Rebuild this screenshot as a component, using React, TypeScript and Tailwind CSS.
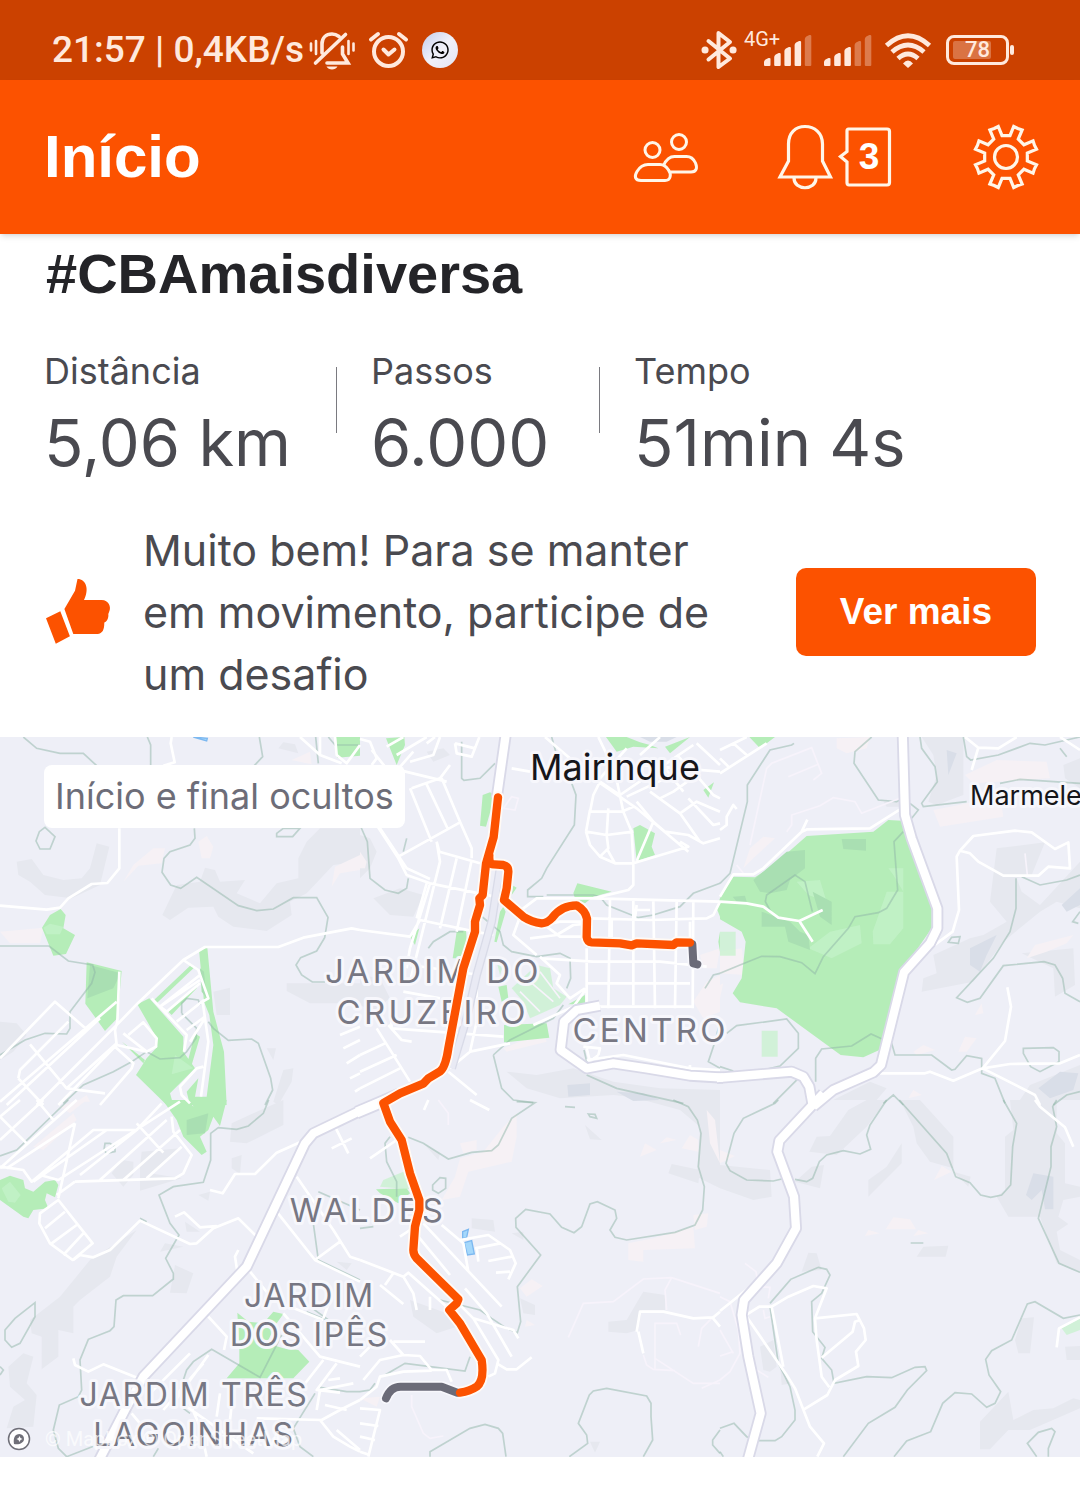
import { FaWhatsapp } from "react-icons/fa";

type Tile = {
  x: number;
  y: number;
  shade?: string;
  slate?: string;
  sand?: string;
  green?: string;
  mint?: string;
  dark?: string;
  water?: string;
  contour?: string;
  faint?: string;
  road?: string;
  highway?: string;
  rail?: string;
};

// Map geometry, one block per map tile, in thirds of a point.
const tiles: Tile[] = [
  {
    x: 0,
    y: -6,
    shade:
      "M50 380L95 372 130 420 190 435 245 430 270 400 290 325 328 335 300 450 215 490 135 480 90 440 55 420ZM487 540L530 450 600 440 615 398 645 405 660 440 735 435 710 475 780 505 830 445 895 430 895 370 920 320 960 280 1080 280 1080 380 1000 390 920 475 870 500 875 540 800 588 700 575 655 545 640 515 565 518 510 555ZM835 40L850 22 885 28 895 55ZM860 745H1080V805H930L860 768ZM640 770L690 758V840H650ZM0 860L50 865 80 900 40 950 0 975ZM820 1100L850 1005 880 1000 875 1040 835 1110ZM800 940H828L820 975Z",
    sand: "M0 590L130 578 120 625H30ZM370 440L400 390 460 340 495 340 485 385 415 392ZM595 320L620 303 640 335 630 370 605 370ZM995 455L1005 395 1080 360V405L1020 415ZM875 75L930 50 935 88ZM230 1100L260 1080 270 1100Z",
    green:
      "M126 578L150 540 182 522 197 540 190 580 225 600 198 657 160 662ZM260 682L365 708 352 850 315 888 256 806ZM412 808L448 790 550 905 550 950 585 1000 510 1075 520 1110H500L408 1020 440 970 472 935 465 900ZM597 645L622 638 640 830 672 950 680 1110H570L560 1070 595 1030 585 1085 620 1085 640 930 628 840 612 800ZM462 795L575 688 582 698 470 805ZM505 830L595 745 590 760 515 840ZM585 895L600 905 575 990 562 985ZM366 920L435 975 430 985ZM1008 6H1080V62L1012 68Z",
    dark: "M270 690L362 715 340 760 262 790ZM600 700L612 710 620 790 605 770Z",
    mint: "M130 578L150 566 190 575 180 598 140 598ZM525 960L580 1000 515 1018Z",
    water: "M580 6L622 10 620 18Z",
    contour:
      "M70 6L110 40 180 55H250L290 92M442 6L452 30V92M778 6L788 65 760 95M135 277L165 305 150 342H120L108 318 118 290ZM583 280L585 310 570 330 510 350 492 370 486 412 512 450 542 460 590 427 715 512 770 527 820 522 880 488H950L984 547 974 608 950 648 902 668 888 690 905 720 937 741H975M0 633H147L205 678 278 690 285 712 275 745 210 830V880L200 897 135 895 75 915 0 960M830 295L850 280H900L878 305H830ZM545 835V805L560 790 595 795 600 810M545 835L590 880 588 910 560 950 540 968 480 972 440 950 395 980 340 1010 250 1050 190 1105M625 860L640 880 685 916 755 912 775 925 812 1030 818 1065 795 1110M947 6L955 85M985 6L1005 30H1080",
    road:
      "M0 512L140 524 180 518 205 490 275 447 322 444 358 400V280M515 6L512 25 524 82 490 92M0 970L165 800 262 885M412 806L500 722 550 675 615 636H835L910 608 1055 580 1080 585M550 675L595 705 625 790 608 800 625 920 603 1085M600 720L480 815 600 735M455 790L560 900 552 950M480 815L500 830 600 745M530 860L612 795M560 885L615 845M570 920L615 850M370 895L440 950M385 900L430 862 470 910 468 935 440 950 350 930 345 885 352 860 358 710M0 1100L350 800M20 1110L300 850M110 1110L360 860 412 806M175 1110L345 935 400 985 395 1000 300 1110M90 928L200 1060 315 1075M55 1030L60 1005 205 860M55 1030L130 1110M200 1060L350 925M610 995L590 1000 540 1055 545 1080 570 1105M900 6L960 60 1025 85M960 6V60M1005 6L1010 60 1040 85 1080 30M1020 900L1080 875M1030 940L1080 915M1040 985L1080 960M1050 1030L1080 1015M1065 1070L1080 1060",
  },
  {
    x: 1080,
    y: -6,
    shade:
      "M0 300L30 310 50 350 30 400 0 430ZM40 490L120 460 190 480 160 545 90 540ZM440 1010L530 1020 640 1000 760 1040 900 1060 1080 1065V1095H900L760 1080 600 1090 500 1060ZM0 720L60 730 90 790 40 830 0 810ZM200 50L250 40 270 60 220 80Z",
    slate: "M840 6H950L920 20H870ZM622 1050L690 1045 690 1080 625 1085ZM770 1070L850 1075 900 1095 820 1098Z",
    sand: "M1040 740L1080 720V830L1030 850 1000 800ZM430 940L550 890 560 920 440 950ZM0 350L20 380 15 400 0 400ZM1020 660L1080 640 1070 700H1030Z",
    green:
      "M78 10L133 6 135 30 110 90ZM368 180L390 172 405 180 378 275 360 272ZM738 6H800L840 22 870 30 895 40 820 35 770 50ZM915 35L990 6 930 55ZM820 280L840 270 885 295 875 335 885 360 830 378ZM1030 165L1062 142 1045 188ZM640 475L652 445 755 470 700 485 675 505 645 490ZM150 605L178 580 165 630ZM290 590L318 585 320 615 302 670H278ZM403 620L420 530 430 515 437 530 410 622ZM460 452L470 458 455 480ZM415 755L440 750 445 790 425 800ZM432 870L560 865 568 908 432 922ZM625 808L675 780V808ZM1080 490L1070 520 1080 545ZM1080 590L1075 620 1080 650Z",
    mint: "M455 760L530 690 570 700 580 760 620 785 600 810 510 850 490 800ZM410 680L430 690 420 720Z",
    contour:
      "M305 20V130L312 136 360 130 405 85M575 6L590 60M635 145L648 180 643 270 560 400 545 430 503 465V485H550M560 480H700L720 485 740 510 835 548 880 540 960 515 1000 475 1080 445M0 270L22 320 30 430 75 465 115 475 140 460 145 430M140 310L130 350M205 640L220 620 270 590H310M360 540L420 590 430 630 455 650 530 665 600 655 630 670 632 730 620 760M400 960L450 915 580 850 610 810M400 960L410 1000 425 1060 460 1095 520 1103M1080 715L1060 720 1035 760M1080 860L1065 920 1045 980 1080 1000M680 1020L770 1060 970 1105M672 945L685 1000",
    road:
      "M0 12L30 20 50 70 35 90M80 35L130 6M110 60L200 6M150 80L220 60 240 6M160 50L90 130M200 25L225 6M285 25L345 40 358 6M285 25L290 55 335 65 345 40M35 45L75 95 260 140M155 160L240 130 270 90M245 130L300 260 335 340V370M150 160L215 320M200 148L265 285M115 365L300 262M0 230L50 270 115 370 140 420 210 445 430 490M60 280L140 400 210 432M230 320L238 350 360 385M230 320L240 380 150 740M290 370L240 580M335 375L290 590M210 445L150 640 140 700M0 585L150 605 180 555 345 590 400 600M200 445L170 550M455 100L510 110M555 6L700 130 830 220 985 350M715 6L765 110 790 230 815 290 820 380M690 230H785L820 215M690 230L700 180 720 140M678 290L690 225M678 290L740 300 820 290M678 290L690 330 720 365 765 385H820L985 335 960 320M740 300L745 340 720 365M740 300L745 220M765 385L740 340M720 140L780 180 1000 30M840 90L1080 110M830 200L880 260 830 378M880 260L915 290 985 300 1030 325 1080 310M800 185L960 110M900 190L940 170 1010 120M870 170L960 235 1010 200 1080 230M960 235L1020 320M985 190L1060 270 1080 265M1000 110L1060 180 1080 190M900 80L970 170M950 60L1020 130M1010 25L1080 90M840 60L900 6M800 40L720 130M820 380V450L805 465 700 490 530 490 490 520 480 545 460 600 530 660M510 610L590 600 640 570 690 565M560 575L600 605H680M550 570L600 560H680M690 550L870 555 1040 550 1060 540 1080 500M820 490V810M750 490L745 820M880 495L885 820M950 495L945 820M1000 495L998 820M700 490L1080 500M820 525H870M830 510L825 550M680 680H900L1040 695M545 670L700 680M680 745H990M640 815H1000M680 640V820M755 550V640M990 560V620M540 665L600 720 590 745 630 790 675 760M150 690L360 720M130 770L240 790M90 800L95 880 430 905M85 870L125 915 155 920M50 880L150 1040M0 960L75 925M0 1010L110 960M0 1060L120 1000M265 1010L350 1080M270 1000L330 950 450 925M330 950L350 860 350 720M520 870L640 815 680 760M680 940L690 980 715 960M670 935L720 940 715 960M680 975L790 960 990 1000 1080 1005M990 990V1010",
    faint: "M430 220L455 185 475 190 465 225ZM510 740L580 800M480 770L540 830M540 710L600 790",
    rail: "M420 400L395 560 350 720 320 850 275 1000",
    highway:
      "M437 0L410 190M720 812L650 825 612 860 602 945 680 1000 760 985 860 1000 990 1022 1090 1028M120 1075L-10 1130",
  },
  {
    x: 2160,
    y: -6,
    shade:
      "M605 6H730V180L650 210 625 200 650 120 640 60ZM830 340L975 322 935 420 890 430 905 470 960 510 1080 380V520L1010 500 960 530 850 620 760 740 605 770 610 730 650 715 640 660 750 610 790 600 860 560 810 500ZM880 100L960 95 980 130 890 135ZM1030 90L1080 70V160L1035 130ZM780 110L820 120 800 150ZM905 655L1060 640 1065 750 1005 785 1000 700ZM490 200H545V215H500ZM350 1090L450 1040 500 1060 470 1095H340ZM900 1095L930 1050 1080 990V1095Z",
    slate: "M680 45L710 55 685 120ZM750 640L830 600 800 660 780 710 750 690ZM1025 510L1080 460V510L1040 530ZM955 1060L1020 1010 1075 1015 1060 1065 990 1090Z",
    sand: "M350 10L450 6 440 40 380 55 350 40ZM640 225L840 185 850 245 660 275ZM735 120L830 75 980 80 990 130 760 145ZM70 400L90 340 130 305 165 310 100 370ZM920 670L945 630 1060 600 1040 625 980 650ZM0 650L65 640 75 720 0 715ZM715 950L735 905 770 910 740 950ZM580 950L610 930 645 945 590 960ZM765 840L785 805 790 835ZM0 750L10 745 0 790ZM565 1090L580 1065 605 1080Z",
    green:
      "M0 490L38 425 105 427 155 395 260 303 460 290 505 255 545 257 635 520V580L552 700 478 945 430 967 362 960 170 820 60 802 38 775 65 730 77 620 65 590 0 553ZM88 6H165L120 40Z",
    mint: "M125 887H173V965H125ZM0 590H47V662H0ZM265 640L330 590 420 570 425 625 335 670ZM458 590L500 470 550 470V580L510 628H460ZM505 400H550V470L520 420ZM230 440L300 435 320 500 265 480Z",
    dark: "M100 435L200 350 255 345V400L210 435 200 465 150 475 120 470ZM365 312H438V347L370 342ZM278 470L335 500V570L300 545ZM125 530L210 560 240 590 265 600 270 645 205 620 195 575H125ZM38 485L75 482 80 500H50Z",
    contour:
      "M222 25L215 30 150 45 82 150V200L30 415 0 445M455 6L405 50 402 85 475 195 530 200 550 190M600 6L605 40 645 95 652 140 605 205 610 215 740 200M730 6L740 65 752 75 835 60 930 25 975 30 1080 6M840 145L900 133 1080 145M1020 40L1040 65M550 290L522 320 533 465 500 520 475 533 405 545 385 580 310 665 285 716 245 683 180 665 125 664 60 690 0 715M277 530L255 440 225 420 140 480 136 500 155 535M287 1040V970L305 942 395 933 453 897 515 925 525 960H635L695 1005 705 1003 740 962 785 970V1015L825 1030 855 1105M888 430V520L870 590 820 670 710 788 742 802 780 790 850 692 972 680 1005 690 1028 730 1035 775 1080 800M905 425L960 450 1040 435 1080 420M685 622L695 607 720 605 715 625ZM570 205L595 225 575 250M910 940L1000 938 1017 950V980L960 1010 932 995 910 955ZM20 895L50 872 200 852 235 895V940L180 993 110 1010M0 995L40 1008M160 1105L235 1030M1080 530L1058 560 1075 565M490 1105L520 1080 550 1110M1000 1110L1040 1080 1080 1070",
    road:
      "M0 500L80 505 130 515 175 548 238 558 308 525M238 558L278 620M0 485L40 418H100L130 400 245 290 262 254M245 290L262 283 450 280 545 220M0 115L140 25M0 70L25 95M0 45L80 6M40 25L80 60M735 6L775 38 835 40 890 6M775 38L755 105M1020 6L1080 45M720 347L710 365 717 525 698 590 630 640M720 347L760 303 885 287 935 292 1005 342 1045 322 1050 400 985 395 955 422H850L775 380 750 355ZM480 1015H615L630 1010 700 1037 788 1000 855 918 873 815 862 757M788 1000L870 987 1020 985 1080 960M788 1000L945 1080 960 1110M0 285L20 270V245L40 210 50 222",
    faint:
      "M90 330L140 100 155 85 275 38 305 115 280 135M205 125L295 88M200 290L215 270V240L300 212 340 188 405 200 425 235 540 190M915 355L922 420M50 390L70 415",
    highway:
      "M548 -10L555 240 575 310 652 520V580L630 625 552 712 483 990 460 1012 340 1065 280 1115M-10 1029L215 1010 250 1025 268 1055 278 1110",
  },
  {
    x: 0,
    y: 1089,
    shade:
      "M90 660L180 590 270 480 410 390 350 470 330 530 240 600 220 620V700L175 690V770L125 808V710L95 700ZM25 800L70 760 100 770 80 850 110 885 100 980 20 985 40 920 75 900 30 860ZM760 40L850 0V75L740 130 690 125 695 70ZM335 220L365 180 400 185V225L370 260ZM420 200L425 155 540 145 450 220 545 235 420 272ZM695 175L725 165 720 222 695 205ZM595 285L630 275 625 302ZM480 455L495 430 550 440ZM525 495L580 520 560 580 510 578ZM555 365L600 395 560 395ZM1010 485L1055 490 1040 510Z",
    sand: "M100 140L220 40 230 60 130 150ZM180 20L230 0H260L210 40Z",
    green:
      "M488 0H565L580 20 575 0H680L660 78 640 50 625 90 600 110 620 155 605 165 550 110 530 60ZM0 240L30 227 70 240 75 265 100 275 135 245 165 240 175 255 165 292 140 280 135 300 145 325 100 330 85 355 70 350 0 300ZM712 638L745 665 790 670 820 635 850 642 830 670 800 730 850 745 895 750 928 785 880 835H680L718 790V750ZM655 870L690 890Z",
    mint: "M5 265L30 245 62 285 45 308 25 305Z",
    dark: "M560 60L625 40 615 100 560 105Z",
    contour:
      "M0 168L50 150 205 0M330 130L345 140V155L320 160 312 150 315 130ZM806 0L790 40 745 78 710 88 655 83 632 100V180L610 247 520 260 477 285 510 370 537 405 497 475 520 520V537L458 587H370L348 600 342 680 330 692 265 718 240 780 245 870 235 890 178 915 160 990 175 1045 200 1070 290 1035M105 608V650L60 730 35 742 15 720V690L45 655ZM0 800L10 810 0 825M420 355L440 365M550 840L560 810 580 785 635 748 780 832 845 705M550 925L570 940M940 370L955 480 1080 540M955 275L1080 330M960 862L1040 875H1080M945 880L880 985 900 1040 940 1070M920 635L980 660M460 1070L475 1045M930 620L1000 670",
    road:
      "M0 50L60 0M0 120L130 0M0 205L230 0M20 205L225 70M0 200L70 210 95 245 280 90H410L485 10M120 225L175 240 540 5M225 70L175 295M225 245L525 235 550 220 575 165 520 95 515 50M240 225L410 90M300 240L500 60M370 240L540 90M440 235L545 140M410 70L490 158M100 245L320 90M80 130L0 50M160 60L110 0M175 300L120 340 118 370 150 430 218 480 278 430ZM135 385L195 335M155 430L230 375M190 465L250 400M170 285L225 245M220 480L240 465 280 472 330 450 420 362 570 432 590 430 640 385 715 355 770 410M525 350L552 337 600 382 650 378M630 270L668 280 705 222H765L830 158 915 120M1005 80L1045 160M995 145L1055 115M890 230L1000 390 1050 470 1080 480M830 335L945 480 1080 545M945 480L1020 425M715 450L705 470 712 515M750 515L820 600 970 660M625 650L680 710 672 750M220 775L225 795 265 815 310 793 415 835M450 880L570 760M520 910L625 765M490 930L610 790M560 840L565 900 600 980 620 1070M650 950L660 880M690 960L700 870M395 940L420 970M560 920L760 1060M950 930L960 870 1060 850M1080 900L1020 930 965 960 770 955M960 960L1000 1010 1050 1040 1080 1055M975 915L1040 930M1010 990L1080 1050M970 780L900 870M1010 790L950 870 1020 878M850 640L960 770 1080 800M985 840L1020 835M970 655L990 600",
    highway: "M1090 28L940 100 915 130 740 500 430 830 375 930 295 1085",
  },
  {
    x: 1080,
    y: 1089,
    shade:
      "M850 0H970L1080 0V265L1010 230 1020 80 960 30ZM925 220L935 192 1020 210 1015 250ZM675 75L725 120 690 118ZM335 355L400 360 405 395 335 385ZM455 400L490 395V420ZM835 600L850 575 915 585V630H845L835 690 800 700 745 695V665L800 660ZM150 600L260 640 290 680 230 700 160 650ZM480 595L525 615V645L490 640ZM690 1025H720L705 1058ZM190 130L240 160 235 180Z",
    sand:
      "M430 80L470 40V110L455 185 325 215 300 290 245 300 285 230 300 175 370 155ZM300 130L350 120V150L310 160ZM805 430L880 415 1000 380 1005 445 850 450 850 485 805 480ZM480 565L515 538 548 558 500 590ZM1000 345L1045 340 1040 380 1005 390ZM965 145L990 105 1015 120V155ZM840 170L855 130 890 150ZM900 130L920 112 950 120ZM1040 30L1065 60 1080 190 1050 130ZM0 895L60 890 50 920ZM495 680L500 660 525 675Z",
    green: "M48 268L140 265 150 280 115 310 60 280Z",
    mint: "M60 260L70 240 130 215 150 240V268Z",
    water: "M308 395L325 388 320 412 308 416ZM313 428L335 422 343 462 322 465Z",
    contour:
      "M470 5L525 8 455 55 415 135 395 152 335 157 265 177 190 130 145 112M90 110L75 130 80 185 110 245V290M218 255L240 233 257 235V265L235 280 218 270ZM615 20L645 22M685 42L705 43 710 55 690 50ZM940 0L985 20 1012 60 1023 100 1015 200 1033 260 1028 330 1005 375 945 397 800 420 765 412 750 390 770 355 765 330 712 305 690 312 665 380 642 398 605 382 570 342 497 328 467 355 468 382 542 465 472 560 482 665 472 698 440 685 395 655 360 630 240 600M210 1070V1055L330 985 375 973 415 985 428 1000 438 1070M628 1070L683 1030 680 1005 655 970 688 885 700 873 740 865 860 888 873 910V950L878 1020 850 1070M1080 990L1058 1020V1035L1080 1060M75 825L135 790 315 813 330 770M0 875L30 870 45 850M0 385L40 380",
    road:
      "M205 0L192 30M330 0L388 30M30 175L110 120M245 375L310 430 325 515M300 420L385 405 450 450 467 490 445 538M345 445L420 430M350 440L355 485M385 483L455 470M408 518L450 515M190 370L425 620M175 410L270 525M120 410L150 390M315 565L380 640 455 770M295 610L340 655 460 690 475 715M340 655L415 780 405 820 385 830M410 790L440 808 470 808 515 772M0 480L130 530 160 580 170 630M60 555L130 612M75 555L100 520M130 530L145 518 260 620 300 660M210 590V630M100 725H195M90 720L130 765 180 768 215 810H260L275 845M0 770L30 740M10 840L60 780 130 765M0 900L50 860 60 830 130 815 215 812M0 925L60 930 25 1070M0 970L55 978M0 1010L45 1020M0 1055L30 1065M830 695L840 635H910L1000 655 1060 652 1080 635M835 695L850 760M1055 650L1080 680",
    faint:
      "M265 75V40L235 0M625 712L670 610 760 605 850 537 935 533 1080 580M935 533L915 570 920 630M885 810V670H950L962 705M885 775L1000 850 1080 850M850 765L860 795 880 808 945 812M1055 655L1025 685 1015 740M155 885V920L190 1000 210 1015 250 1008M1025 865L1080 840",
    highway: "M72 6L-10 40",
  },
  {
    x: 2160,
    y: 1089,
    shade:
      "M0 195L150 210 155 290 100 300 0 265ZM385 30L440 0H500L440 80 350 165 268 155 290 110 330 108ZM540 0H600L700 110V205L630 185 590 130 580 80ZM445 240L500 200 545 130V190L445 290ZM275 200L312 195 300 265 225 245ZM870 0H1010V100L1035 130V250L1080 260V290L1030 300 1015 350 1045 372 1010 395 1020 450 1080 480V520L1010 490 960 350H865L830 290 855 270V110L880 90ZM700 215L752 230 745 260ZM245 515L265 458 290 460 305 510ZM590 470L610 440 685 437 677 470ZM120 740L160 720 170 800 150 815 130 810ZM885 720L905 655 942 652 930 760H895ZM780 965L865 875 880 960 940 930 1000 925 1060 895 1080 900V925L930 990 865 990 810 1048H780ZM1035 740L1080 738V780H1040ZM180 790L215 850 185 855Z",
    slate: "M940 220L1000 230V328H975L965 270 935 300 918 285Z",
    sand: "M497 388L520 352 570 358 588 388ZM642 240L665 198 695 215ZM435 408L445 390 480 400ZM580 408L595 390 625 400ZM0 150L45 168 0 190Z",
    mint: "M1025 685L1080 655V690L1040 705Z",
    contour:
      "M175 0L165 10 70 55 42 100 18 190 30 212 80 240 160 243 185 237M225 238L260 245 278 235 298 185 320 165 370 152 420 162 452 148 440 105 450 75 500 0M538 0L680 160 707 230 750 248 782 285 812 292 845 285 872 255 878 140 890 70 850 0M1010 0L998 20 1010 80 993 140V200L955 355 1017 490 1080 517M572 429H610M150 610L212 538 295 502 320 508 330 525 305 580 275 605 278 695 315 742 305 775 335 810 342 850 440 830 515 833 585 802 615 800 620 812 562 870 525 922 445 970 370 1070M150 620L175 790 210 860 225 930V960L185 1010 165 1022H115L80 1010 42 970 0 985M1080 645L1030 655 945 605 922 612 875 720 815 752 797 778 807 825 842 875 825 910 800 922 755 882 705 878 668 910 632 995 560 1023 522 1070M950 1070L922 1030 955 997 995 985 1005 995 985 1045V1070M0 1055L10 1070",
    road:
      "M0 633L85 565M70 650L118 620H155L205 590 280 558 320 565 285 655 290 720 305 830 328 862M155 620L190 800M80 650L200 825 225 865 270 980 312 1030 292 1070M285 655L410 642 432 685 437 720 408 755 415 798 345 840 322 885 252 928M305 773L398 695 405 665 420 660M945 0L960 20 1035 82 1060 140M1010 742L1017 685 1080 652",
    faint:
      "M0 590L30 605 55 690 60 760 30 815 0 840M75 490L108 515 112 540M120 560L150 562 145 595M130 630L135 655 150 650M0 690L40 760M0 768L40 755M110 810L145 832",
    highway: "M310 -20L178 122 172 155 222 290 228 385 170 490 72 600 65 645 85 770 122 940 82 1085",
  },
];

const route =
  "M1494 181L1481 300 1458 380 1448 474 1438 484 1440 504 1425 554V584L1390 694 1345 934Q1337 990 1320 1003L1285 1024 1270 1040 1200 1069 1150 1098 1170 1154 1205 1209 1230 1309 1258 1389V1419L1245 1469 1240 1539Q1240 1552 1250 1564L1375 1687 1370 1699 1348 1719 1380 1759 1445 1869Q1454 1930 1430 1949 1410 1963 1380 1967M1468 355Q1466 384 1482 382L1510 384Q1526 388 1525 405L1520 454 1512 489 1570 539Q1595 555 1625 559 1642 558 1656 543 1684 505 1730 505 1756 520 1761 545L1760 600Q1762 615 1775 616L1860 619 1895 625 1910 619 2020 624 2030 616 2070 617";
const hiddenEnds = "M2077 622L2080 679 2092 682M1372 1967L1325 1949H1205Q1172 1947 1158 1984";

function Layer({ kind, className }: { kind: keyof Omit<Tile, "x" | "y">; className: string }) {
  return (
    <g className={className}>
      {tiles.map((t) =>
        t[kind] ? <path key={`${t.x}-${t.y}`} transform={`translate(${t.x} ${t.y})`} d={t[kind]} /> : null,
      )}
    </g>
  );
}

const centralDistricts: [number, number, string][] = [
  [1192, 738, "JARDIM"],
  [1542, 738, "DO"],
  [1298, 862, "CRUZEIRO"],
  [1952, 916, "CENTRO"],
  [1104, 1454, "WALDES"],
];

const southernDistricts: [number, number, string][] = [
  [928, 1710, "JARDIM"],
  [928, 1828, "DOS IPÊS"],
  [582, 2007, "JARDIM TRÊS"],
  [582, 2126, "LAGOINHAS"],
];

function RouteMap() {
  return (
    <section className="relative" aria-label="Mapa do percurso">
      <svg viewBox="0 0 3240 2160" className="block w-full" role="img" aria-label="Percurso em Mairinque">
        <rect width="3240" height="2160" fill="#eeeff7" />
        <Layer kind="shade" className="fill-[#e6e8ef]" />
        <Layer kind="slate" className="fill-[#d9dee8]" />
        <Layer kind="sand" className="fill-[#f6f1f5]" />
        <Layer kind="green" className="fill-[#b5edb8]" />
        <Layer kind="mint" className="fill-[#c4f2cb]/70" />
        <Layer kind="dark" className="fill-[#a9dfb2]" />
        <Layer kind="water" className="fill-[#a5d8fb] stroke-[#7cb8f0] stroke-[4]" />
        <Layer kind="contour" className="fill-none stroke-[#8fb5a8]/50 stroke-[5]" />
        <Layer kind="faint" className="fill-none stroke-[#f7f3fb] stroke-[5]" />
        <Layer kind="road" className="fill-none stroke-white stroke-[8] [stroke-linejoin:round]" />
        <Layer kind="rail" className="fill-none stroke-[#d9dbe8] stroke-[26]" />
        <Layer kind="rail" className="fill-none stroke-[#e9eaf4] stroke-[18]" />
        <Layer kind="highway" className="fill-none stroke-[#d9d9e8] stroke-[36] [stroke-linejoin:round]" />
        <Layer kind="highway" className="fill-none stroke-white stroke-[25] [stroke-linejoin:round]" />
        <g
          className="fill-[#777783] stroke-[#f7f7fc] stroke-[18] font-[Inter,sans-serif] text-[99px] [paint-order:stroke] [stroke-linejoin:round]"
          textAnchor="middle"
        >
          <g className="tracking-widest">
            {centralDistricts.map(([x, y, name]) => (
              <text key={name} x={x} y={y}>
                {name}
              </text>
            ))}
          </g>
          <g className="tracking-wider">
            {southernDistricts.map(([x, y, name]) => (
              <text key={name} x={x} y={y} className="text-[96px]">
                {name}
              </text>
            ))}
          </g>
        </g>
        <g className="fill-[#16161a] stroke-[#f7f7fc] stroke-[18] font-[Inter,sans-serif] [paint-order:stroke] [stroke-linejoin:round]">
          <text x="1590" y="128" className="text-[108px]">
            Mairinque
          </text>
          <text x="2910" y="204" className="text-[81px]">
            Marmele
          </text>
        </g>
        <g fill="none" strokeLinecap="round" strokeLinejoin="round">
          <path d={route} stroke="#fffaf5" strokeWidth="36" />
          <path d={hiddenEnds} stroke="#f7f7fc" strokeWidth="34" />
          <path d={hiddenEnds} stroke="#6b6b78" strokeWidth="24" />
          <path d={route} stroke="#fc5200" strokeWidth="25" />
        </g>
      </svg>
      <p className="absolute left-11 top-7 rounded-lg bg-white px-[11px] text-4xl leading-[63px] text-[#6d6d78]">
        Início e final ocultos
      </p>
      <div className="absolute bottom-1 left-[7px] flex items-center gap-3.5">
        <svg viewBox="0 0 24 24" className="size-6" fill="none" aria-label="Mapbox">
          <circle cx="12" cy="12" r="10.5" fill="#fff" stroke="#6f6f78" strokeWidth="1.5" />
          <path d="M7 17c-1-6 1-10 5.500-10a4.800 4.800 0 0 1 4.500 5c0 4-5 6-10 5Z" fill="#6f6f78" />
          <path d="m12.500 9 1 2 2 1-2 1-1 2-1-2-2-1 2-1Z" fill="#fff" />
        </svg>
        <a href="#map-credits" className="font-[Roboto,sans-serif] text-xl text-white/70">
          © Mapbox © OpenStreetMap
        </a>
      </div>
    </section>
  );
}

function SignalBars({ level }: { level: number }) {
  return (
    <svg viewBox="0 0 48 32" className="h-8 w-12" fill="#ffe9dd" aria-hidden="true">
      {[8, 13, 19, 25, 31].map((h, i) => (
        <path
          key={h}
          d={`M${i * 10.2} 30v${-(h - 6)}q0-1.500 1.500-2.500l3-1.500q2-.5 2 1v${h - 2}q0 1-1 1h-4.500q-1 0-1-1Z`}
          opacity={i < level ? 1 : 0.35}
        />
      ))}
    </svg>
  );
}

function StatusBar() {
  return (
    <div className="flex h-20 items-end justify-between bg-[#cb4100] pr-[71px] pb-2.5 pl-[52px] font-[Roboto,sans-serif] text-[#ffe9dd]">
      <div className="flex h-10 items-center">
        <span className="text-[37px] font-medium whitespace-nowrap">21:57 | 0,4KB/s</span>
        <svg viewBox="308 28 48 42" className="ml-1 h-[42px] w-12" fill="none" stroke="currentColor" strokeWidth="3.600" strokeLinecap="round" aria-hidden="true">
          <path d="M315.500 62 345.500 33.500M322 52V43c0-6 4-10 10-10 3 0 5 1 7 2.500M342.500 46v7l5.500 9H327" />
          <path d="M311 42.500v7M316 40v13M348.500 40v13M353.500 42.500v7" strokeWidth="2.600" />
          <path d="M326.500 65.500h11c-2 4-9 4-11 0Z" fill="currentColor" stroke="none" />
        </svg>
        <svg viewBox="368 28 42 42" className="ml-3 size-[42px]" fill="none" stroke="currentColor" strokeWidth="4" strokeLinecap="round" strokeLinejoin="round" aria-hidden="true">
          <circle cx="388.500" cy="50.500" r="14.500" />
          <path d="m383.500 48.500 5 5 6-5M371 38.500l7-5.500M399 33l7 5.500" />
        </svg>
        <span className="ml-3 flex size-9 items-center justify-center rounded-full bg-linear-to-br from-[#c3cdec] via-[#f1f1f9] to-[#e4e4f2]">
          <FaWhatsapp className="size-5 text-black" aria-label="WhatsApp" />
        </span>
      </div>
      <div className="flex h-10 items-center">
        <svg viewBox="700 28 38 42" className="h-[42px] w-[38px]" fill="none" stroke="currentColor" strokeWidth="4" strokeLinecap="round" strokeLinejoin="round" aria-hidden="true">
          <path d="M708.500 40 730 57.500 718.500 66V32L730 41 708.500 58.500" />
          <path d="M705 49h.1M733 49h.1" strokeWidth="7" />
        </svg>
        <div className="relative ml-[26px]">
          <SignalBars level={4} />
          <span className="absolute -top-[7px] -left-5 text-xl leading-6">4G+</span>
        </div>
        <span className="ml-3">
          <SignalBars level={3} />
        </span>
        <svg viewBox="884 30 48 38" className="ml-3 h-[38px] w-12" fill="none" stroke="currentColor" strokeWidth="4.800" aria-hidden="true">
          <path d="M886.500 44.500Q908 25 929.500 44.500M892 51q16-14 32 0M898 57.500q10-9 20 0" />
          <path d="m903 62.500 5 4.500 5-4.500q-5-6-10 0Z" fill="currentColor" stroke="none" />
        </svg>
        <div className="relative ml-3.5 flex h-[30px] w-[63px] items-center justify-center rounded-lg border-3 border-[#ffe9dd]">
          <span className="absolute inset-y-[3px] left-1 w-[38px] rounded-xs bg-[#ffe9dd]/30" />
          <span className="relative text-[22px] leading-none font-medium">78</span>
          <span className="absolute -right-2 h-2.5 w-1 rounded-xs bg-[#ffe9dd]" />
        </div>
      </div>
    </div>
  );
}

const gear = Array.from({ length: 8 }, (_, i) => 22.5 + i * 45)
  .flatMap((a) => [
    [a - 11.9, 21.7],
    [a - 8.3, 31.5],
    [a, 30.8],
    [a + 8.3, 31.5],
    [a + 11.9, 21.7],
  ])
  .map(([a, r]) => `${33 + r * Math.sin((a * Math.PI) / 180)} ${33 - r * Math.cos((a * Math.PI) / 180)}`)
  .join("L");

function Header() {
  return (
    <header className="relative flex h-[154px] items-center bg-[#fc5200] pr-[41px] pl-11 text-[#fff6e8] shadow-md">
      <h1 className="flex-1 font-['Liberation_Sans',sans-serif] text-[60px] leading-none font-bold text-white">Início</h1>
      <button type="button" aria-label="Amigos">
        <svg viewBox="633 132 66 50" className="h-[50px] w-[66px]" fill="none" stroke="currentColor" strokeWidth="3">
          <circle cx="652.500" cy="150" r="7.500" />
          <circle cx="679" cy="142" r="7.500" />
          <path d="M641 180.500h24c6 0 6.500-6.500 3.500-10.500-2.500-4-5-5.500-8.500-5.500h-12c-5 0-8 2-11 7-3 5-2 9 4 9Z" />
          <path d="M663.500 165.500c2.500-5.500 6-9 11-9h12c4.500 0 7 2 9 6.500 2 5 1 9-4.500 9h-20.500" />
        </svg>
      </button>
      <button type="button" className="ml-[78px]" aria-label="Notificações: 3">
        <span className="relative block">
          <svg viewBox="777 124 116 66" className="h-[66px] w-[116px]" fill="none" stroke="currentColor" strokeWidth="3.200">
            <path d="M788.500 161V144c0-11 7-17.500 16.500-17.500s17.500 6.500 17.500 17.500v17l8 16H780ZM794 178c0 13 22 13 22 0" />
            <path d="M848.500 129H887q2.500 0 2.500 2.500v51q0 2.500-2.500 2.500H849q-2 0-2-2.500V162l-6.500-5.500 6.500-5V131q0-2 1.500-2Z" />
          </svg>
          <span className="absolute top-0 right-0 flex h-[66px] w-12 items-center justify-center font-['Liberation_Sans',sans-serif] text-[37px] font-bold text-white">3</span>
        </span>
      </button>
      <button type="button" className="ml-20" aria-label="Configurações">
        <svg viewBox="0 0 66 66" className="size-[66px]" fill="none" stroke="currentColor" strokeWidth="3.200">
          <path d={`M${gear}Z`} />
          <circle cx="33" cy="33" r="11.500" />
        </svg>
      </button>
    </header>
  );
}

function Stat({ label, value, className = "" }: { label: string; value: string; className?: string }) {
  return (
    <div className={`whitespace-nowrap ${className}`}>
      <dt className="text-4xl leading-10">{label}</dt>
      <dd className="mt-3 text-[65px] leading-[80px]">{value}</dd>
    </div>
  );
}

export default function App() {
  return (
    <main className="min-h-screen bg-white font-[Inter,sans-serif] text-[#4a4a50]">
      <StatusBar />
      <Header />
      <section className="px-11">
        <h2 className="pt-2 pl-0.5 font-['Liberation_Sans',sans-serif] text-[56px] leading-[64px] font-bold text-[#242428]">#CBAmaisdiversa</h2>
        <dl className="mt-[45px] flex">
          <Stat label="Distância" value="5,06 km" className="min-w-[258px]" />
          <div className="mx-[34px] mt-4 h-[66px] w-px bg-[#7a7a80]" />
          <Stat label="Passos" value="6.000" className="min-w-[194px]" />
          <div className="mx-[34px] mt-4 h-[66px] w-px bg-[#7a7a80]" />
          <Stat label="Tempo" value="51min 4s" />
        </dl>
        <div className="mt-9 mb-8 flex items-center">
          <svg viewBox="0 0 66 66" className="mx-0.5 size-[66px] shrink-0 fill-[#fc5200]" aria-hidden="true">
            <path d="M0 39.300 14.300 32.300 23.900 57.300 9.800 64.700ZM18.400 30 29 11.700 31.500 0C40 0 43.500 10 38 21H55.600C63 21 65 28 63.500 31.700L62.300 35C63 40 60 43 58.300 43.500 58.300 51 56.500 54.500 51.500 55H27.300Z" />
          </svg>
          <p className="ml-[29px] w-[610px] text-[43px] leading-[62px]">
            Muito bem! Para se manter em movimento, participe de um desafio
          </p>
          <button type="button" className="ml-auto h-[88px] shrink-0 rounded-[10px] bg-[#fc5200] px-11 font-['Liberation_Sans',sans-serif] text-[37px] font-bold text-white">
            Ver mais
          </button>
        </div>
      </section>
      <RouteMap />
    </main>
  );
}
